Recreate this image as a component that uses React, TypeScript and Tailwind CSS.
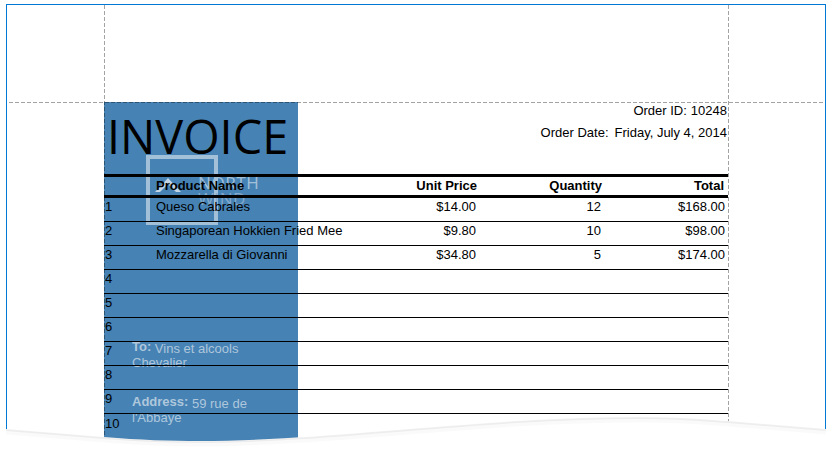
import React from "react";

const products = [
  { n: 1, name: "Queso Cabrales", price: "$14.00", qty: "12", total: "$168.00" },
  { n: 2, name: "Singaporean Hokkien Fried Mee", price: "$9.80", qty: "10", total: "$98.00" },
  { n: 3, name: "Mozzarella di Giovanni", price: "$34.80", qty: "5", total: "$174.00" },
  { n: 4 },
  { n: 5 },
  { n: 6 },
  { n: 7 },
  { n: 8 },
  { n: 9 },
  { n: 10 },
] as { n: number; name?: string; price?: string; qty?: string; total?: string }[];

const edge = "M6 29 L104 37 C140 40 170 41 200 41 C330 41 480 17 640 17 C680 17 700 19 728 21 L826 29";

export default function App() {
  return (
    <div className="relative w-[832px] h-[450px] overflow-hidden bg-white font-['Liberation_Sans',Arial,sans-serif] text-[13px] text-black">
      {/* Report frame */}
      <div className="absolute left-[6px] top-[4px] w-[820px] h-[446px] border-t border-x border-[#0078d4]" />

      {/* Side panel */}
      <div className="absolute left-[104px] top-[102px] w-[194px] h-[340px] bg-[#4682b4]">
        <div className="absolute left-[42px] top-[53px] w-[72px] h-[70px] border-[4px] border-[#a3c0d9]" />
        <svg className="absolute left-[50px] top-[74px]" width="30" height="22" viewBox="0 0 30 22" fill="none">
          <path d="M1 16 L14 2 L27 16 L22 16 L14 8 L6 16 Z" fill="#c4d6e6" />
        </svg>
        <div className="absolute left-[94px] top-[73px] text-[17px] leading-[16px] text-[#a3c0d9] tracking-[0.6px] font-['Open_Sans',sans-serif]">
          NORTH
          <br />
          <span className="text-[#82a9cb]">WIND</span>
        </div>
        <div className="absolute left-[28px] top-[238px] w-[125px] leading-[14px] text-[#aec7dc]">
          <span className="font-bold align-[2px]">To:</span> Vins et alcools Chevalier
        </div>
        <div className="absolute left-[28px] top-[293px] w-[125px] leading-[14px] text-[#aec7dc]">
          <span className="font-bold align-[2px]">Address:</span> 59 rue de l'Abbaye
        </div>
      </div>

      {/* Margin guides */}
      <div className="absolute left-[9px] w-[816px] top-[102px] h-px bg-[repeating-linear-gradient(90deg,rgba(0,0,0,0.36)_0_4px,transparent_4px_6px)]" />
      <div className="absolute left-[104px] top-[5px] w-px h-[440px] bg-[repeating-linear-gradient(180deg,rgba(0,0,0,0.36)_0_4px,transparent_4px_6px)]" />
      <div className="absolute left-[728px] top-[5px] w-px h-[440px] bg-[repeating-linear-gradient(180deg,rgba(0,0,0,0.36)_0_4px,transparent_4px_6px)]" />

      {/* Report body */}
      <div className="absolute left-[104px] top-[102px] w-[624px]">
        <div className="flex justify-between h-[72px]">
          <div className="pl-[3px] pt-[6px] text-[46.8px] leading-[56px] font-['Open_Sans',sans-serif]">INVOICE</div>
          <div className="flex flex-col items-end pr-px">
            <div className="flex gap-[4px] h-[15px] mt-px leading-[15px]">
              <span>Order ID:</span>
              <span>10248</span>
            </div>
            <div className="flex gap-[6px] h-[15px] mt-[7px] leading-[15px]">
              <span>Order Date:</span>
              <span>Friday, July 4, 2014</span>
            </div>
          </div>
        </div>
        <div className="flex h-[24px] items-center border-y-[3px] border-black font-bold">
          <div className="w-[52px]" />
          <div className="w-[200px]">Product Name</div>
          <div className="w-[121px] text-right">Unit Price</div>
          <div className="w-[125px] text-right">Quantity</div>
          <div className="w-[124px] pr-[2px] text-right">Total</div>
        </div>
        {products.map((p) => (
          <div key={p.n} className={`flex h-[24px] pb-[5px] items-center ${p.n < 10 ? "border-b border-black" : ""}`}>
            <div className="w-[52px] pl-px">{p.n}</div>
            <div className="w-[200px] whitespace-nowrap">{p.name}</div>
            <div className="w-[121px] pr-px text-right">{p.price}</div>
            <div className="w-[125px] pr-px text-right">{p.qty}</div>
            <div className="w-[124px] pr-px text-right">{p.total}</div>
          </div>
        ))}
      </div>

      {/* Torn page edge */}
      <svg className="absolute left-0 top-[400px]" width="832" height="50" viewBox="0 0 832 50">
        <path d={`M0 29 L${edge.slice(1)} L832 29 L832 50 L0 50 Z`} fill="#ffffff" />
        <path d={edge} fill="none" stroke="#000000" strokeOpacity="0.02" strokeWidth="5" transform="translate(0 3)" />
        <path d={edge} fill="none" stroke="#000000" strokeOpacity="0.05" strokeWidth="2" transform="translate(0 1)" />
      </svg>
    </div>
  );
}
